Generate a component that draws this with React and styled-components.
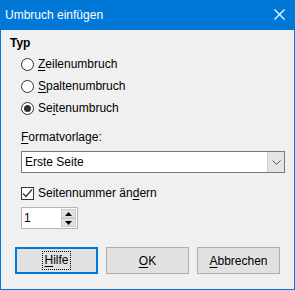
import React from "react";
import styled, { createGlobalStyle } from "styled-components";

const GlobalStyle = createGlobalStyle`
  html, body {
    margin: 0;
    padding: 0;
    background: #f0f0f0;
  }
  * {
    box-sizing: border-box;
  }
`;

const colors = {
  accent: "#0078d7",
  face: "#f0f0f0",
  button: "#e1e1e1",
  buttonBorder: "#adadad",
  text: "#000000",
};

const Window = styled.div`
  width: 295px;
  height: 290px;
  border: 1px solid ${colors.accent};
  background: ${colors.face};
  display: flex;
  flex-direction: column;
  font-family: "Liberation Sans", Arial, sans-serif;
  font-size: 12px;
  color: ${colors.text};
`;

const TitleBar = styled.div`
  height: 29px;
  background: ${colors.accent};
  color: #fff;
  display: flex;
  align-items: center;
  justify-content: space-between;
  padding: 0 9px 2px 4px;
  flex-shrink: 0;
`;

const CloseIcon = () => (
  <svg width="11" height="11" viewBox="0 0 11 11">
    <path d="M0.5 0.5 L10.5 10.5 M10.5 0.5 L0.5 10.5" stroke="#fff" strokeWidth="1.1" />
  </svg>
);

const Body = styled.div`
  padding: 5px 9px 0 9px;
  display: flex;
  flex-direction: column;
`;

const Heading = styled.div`
  font-weight: bold;
  line-height: 16px;
`;

const Group = styled.div`
  margin: 2px 0 0 11px;
  display: flex;
  flex-direction: column;
`;

const OptionRow = styled.label`
  height: 22px;
  display: flex;
  align-items: center;
  gap: 4px;
`;

const Radio = styled.span`
  width: 13px;
  height: 13px;
  border-radius: 50%;
  border: 1px solid #333;
  background: #fff;
  display: flex;
  align-items: center;
  justify-content: center;

  &::after {
    content: "";
    width: 7px;
    height: 7px;
    border-radius: 50%;
    background: ${({ $checked }) => ($checked ? "#333" : "transparent")};
  }
`;

const Key = styled.span`
  text-decoration: underline;
  text-underline-offset: 2px;
`;

const Label = styled.div`
  margin: 10px 0 0 11px;
  line-height: 16px;
`;

const Select = styled.div`
  margin: 6px 0 0 11px;
  height: 22px;
  border: 1px solid #7a7a7a;
  background: #fff;
  display: flex;
  align-items: stretch;
`;

const SelectValue = styled.div`
  flex: 1;
  display: flex;
  align-items: center;
  padding-left: 3px;
`;

const SelectButton = styled.div`
  width: 17px;
  background: #e5e5e5;
  border-left: 1px solid #cfcfcf;
  display: flex;
  align-items: center;
  justify-content: center;
`;

const CheckRow = styled.label`
  margin: 12px 0 0 11px;
  height: 16px;
  display: flex;
  align-items: center;
  gap: 4px;
`;

const CheckBox = styled.span`
  width: 13px;
  height: 13px;
  border: 1px solid #333;
  background: #fff;
  display: flex;
  align-items: center;
  justify-content: center;
`;

const Spin = styled.div`
  margin: 6px 0 0 11px;
  width: 57px;
  height: 22px;
  border: 1px solid #b4b4b4;
  background: #fff;
  display: flex;
  align-items: stretch;
`;

const SpinValue = styled.div`
  flex: 1;
  display: flex;
  align-items: center;
  padding-left: 2px;
`;

const SpinButtons = styled.div`
  width: 16px;
  display: flex;
  flex-direction: column;
  padding: 1px 1px 1px 0;
  gap: 0;
`;

const SpinButton = styled.div`
  flex: 1;
  background: #e1e1e1;
  border: 1px solid #cdcdcd;
  display: flex;
  align-items: center;
  justify-content: center;
`;

const Buttons = styled.div`
  margin: 18px 0 0 5px;
  display: flex;
  gap: 8px;
`;

const Button = styled.div`
  width: 83px;
  height: 27px;
  background: ${colors.button};
  border: ${({ $default }) =>
    $default ? `2px solid ${colors.accent}` : `1px solid ${colors.buttonBorder}`};
  display: flex;
  align-items: center;
  justify-content: center;
`;

const FocusRing = styled.span`
  outline: 1px dotted #000;
  padding: 1px 1px 2px 1px;
  line-height: 14px;
`;

const Chevron = () => (
  <svg width="9" height="5" viewBox="0 0 9 5">
    <path d="M0.5 0.5 L4.5 4.5 L8.5 0.5" stroke="#555" fill="none" strokeWidth="1" />
  </svg>
);

const Check = () => (
  <svg width="11" height="11" viewBox="0 0 11 11">
    <path d="M1 5.5 L4 8.5 L10 1.5" stroke="#333" fill="none" strokeWidth="1.2" />
  </svg>
);

const Triangle = ({ up }) => (
  <svg width="7" height="4" viewBox="0 0 7 4">
    <path d={up ? "M0 4 L3.5 0 L7 4 Z" : "M0 0 L3.5 4 L7 0 Z"} fill="#000" />
  </svg>
);

export default function App() {
  return (
    <>
      <GlobalStyle />
      <Window>
        <TitleBar>
          <span>Umbruch einfügen</span>
          <CloseIcon />
        </TitleBar>
        <Body>
          <Heading>Typ</Heading>
          <Group>
            <OptionRow>
              <Radio />
              <span>
                <Key>Z</Key>eilenumbruch
              </span>
            </OptionRow>
            <OptionRow>
              <Radio />
              <span>
                <Key>S</Key>paltenumbruch
              </span>
            </OptionRow>
            <OptionRow>
              <Radio $checked />
              <span>
                Se<Key>i</Key>tenumbruch
              </span>
            </OptionRow>
          </Group>
          <Label>
            <Key>F</Key>ormatvorlage:
          </Label>
          <Select>
            <SelectValue>Erste Seite</SelectValue>
            <SelectButton>
              <Chevron />
            </SelectButton>
          </Select>
          <CheckRow>
            <CheckBox>
              <Check />
            </CheckBox>
            <span>
              Seitennummer än<Key>d</Key>ern
            </span>
          </CheckRow>
          <Spin>
            <SpinValue>1</SpinValue>
            <SpinButtons>
              <SpinButton>
                <Triangle up />
              </SpinButton>
              <SpinButton>
                <Triangle />
              </SpinButton>
            </SpinButtons>
          </Spin>
          <Buttons>
            <Button $default>
              <FocusRing>
                <Key>H</Key>ilfe
              </FocusRing>
            </Button>
            <Button>
              <span>
                <Key>O</Key>K
              </span>
            </Button>
            <Button>
              <span>
                <Key>A</Key>bbrechen
              </span>
            </Button>
          </Buttons>
        </Body>
      </Window>
    </>
  );
}
